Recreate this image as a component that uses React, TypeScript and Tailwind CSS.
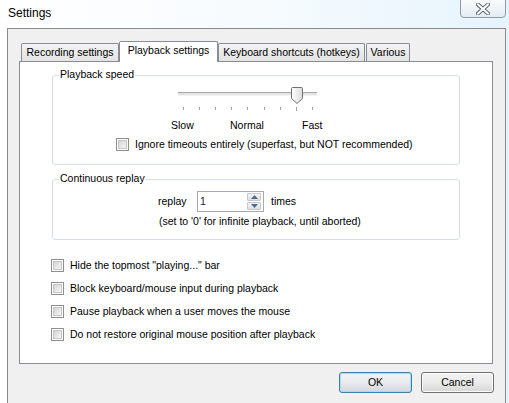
import React from "react";

function Checkbox() {
  return (
    <span className="block w-[13px] h-[13px] border border-[#8f8f8f] bg-white p-[1px] shrink-0">
      <span className="block w-full h-full border border-[#c6c6c6] bg-gradient-to-br from-[#d4d4d4] to-[#f6f6f6]" />
    </span>
  );
}

function CheckRow({ label }: { label: string }) {
  return (
    <div className="flex items-center h-[13px] gap-[6px]">
      <Checkbox />
      <span className="leading-[13px] whitespace-nowrap">{label}</span>
    </div>
  );
}

function Slider() {
  const ticks = Array.from({ length: 9 }, (_, i) => Math.round(8 + i * 16.1));
  return (
    <svg width="150" height="27" viewBox="0 0 150 27" className="block">
      <defs>
        <linearGradient id="thumb" x1="0" y1="0" x2="1" y2="0">
          <stop offset="0" stopColor="#ffffff" />
          <stop offset="1" stopColor="#dcdcdc" />
        </linearGradient>
      </defs>
      <rect x="3" y="7" width="139" height="1" fill="#a9a9a9" />
      <rect x="3" y="8" width="139" height="2" fill="#e3e3e3" />
      <rect x="3" y="10" width="139" height="1" fill="#f4f4f4" />
      {ticks.map((x, i) => (
        <line key={i} x1={x + 0.5} y1={22} x2={x + 0.5} y2={i === 7 ? 26 : 25} stroke="#a6a6a6" strokeWidth="1" />
      ))}
      <path
        d="M117.5 2.5 Q116.5 2.5 116.5 3.5 V13.5 L122 18.5 L127.5 13.5 V3.5 Q127.5 2.5 126.5 2.5 Z"
        fill="url(#thumb)"
        stroke="#6f6f6f"
        strokeWidth="1"
      />
    </svg>
  );
}

function SpinBox() {
  return (
    <div className="w-[67px] h-[21px] border border-[#a6a9b0] bg-white flex items-center justify-between pl-[2px] pr-[2px]">
      <span className="leading-[13px] text-[#23163f]">1</span>
      <div className="flex flex-col w-[14px] h-[17px] gap-[1px]">
        <div className="flex-1 border border-[#c5c9cf] rounded-[1px] bg-gradient-to-b from-[#f4f4f4] to-[#dedede] flex items-center justify-center">
          <svg width="7" height="4" viewBox="0 0 7 4"><path d="M0 4 L3.5 0 L7 4 Z" fill="#4d6a92" /></svg>
        </div>
        <div className="flex-1 border border-[#c5c9cf] rounded-[1px] bg-gradient-to-b from-[#f4f4f4] to-[#dedede] flex items-center justify-center">
          <svg width="7" height="4" viewBox="0 0 7 4"><path d="M0 0 L7 0 L3.5 4 Z" fill="#4d6a92" /></svg>
        </div>
      </div>
    </div>
  );
}

function Tab({ label, width, selected, extra }: { label: string; width: string; selected?: boolean; extra?: string }) {
  if (selected) {
    return (
      <div className={`${width} h-[21px] -mb-px relative z-10 bg-white border-t border-l border-r border-[#898c95] rounded-t-[2px] flex justify-center pt-[2px] leading-[13px] whitespace-nowrap`}>
        {label}
      </div>
    );
  }
  return (
    <div className={`${width} ${extra ?? ""} h-[18px] bg-gradient-to-b from-[#f3f3f3] to-[#e3e3e3] border-t border-l border-r border-[#898c95] rounded-t-[2px] flex justify-center pt-[2px] leading-[13px] whitespace-nowrap`}>
      {label}
    </div>
  );
}

export default function App() {
  return (
    <div className="w-[509px] h-[403px] overflow-hidden relative bg-gradient-to-r from-[#ffffff] via-[#f7fbfe] to-[#e6f4fc] font-['Liberation_Sans',Arial,sans-serif] text-[10.5px] text-black">
      <div className="h-[28px] pl-[8px] pt-[6px] text-[12px] leading-[15px] text-black">Settings</div>
      <div className="absolute left-[460px] top-[-1px] w-[46px] h-[19px] rounded-b-[4px] border border-[#8f9aa6] bg-gradient-to-b from-[#f8fbfd] to-[#e4ecf3] flex items-center justify-center">
        <svg width="14" height="12" viewBox="0 0 14 12">
          <path d="M2 1.5 L12 10.5 M12 1.5 L2 10.5" stroke="#5d6570" strokeWidth="4" strokeLinecap="square" />
          <path d="M2 1.5 L12 10.5 M12 1.5 L2 10.5" stroke="#ffffff" strokeWidth="2" strokeLinecap="square" />
        </svg>
      </div>

      <div className="ml-[7px] w-[499px] h-[375px] border-l border-t border-r border-[#8a8a8a] bg-[#f0f0f0] pt-[12px] pl-[11px]">
        <div className="flex items-end h-[20px] pl-[2px]">
          <Tab label="Recording settings" width="w-[98px]" />
          <Tab label="Playback settings" width="w-[99px]" selected />
          <Tab label="Keyboard shortcuts (hotkeys)" width="w-[147px]" />
          <Tab label="Various" width="w-[44px]" extra="ml-[1px]" />
        </div>
        <div className="w-[474px] h-[303px] border border-[#898c95] bg-white pt-[13px]">
          <div className="ml-[32px] w-[408px] h-[90px] border border-[#d5dfe5] rounded-[3px] relative flex flex-col">
            <span className="absolute left-[6px] top-[-8px] bg-white px-[1px] leading-[13px]">Playback speed</span>
            <div className="mt-[9px] ml-[122px]">
              <Slider />
            </div>
            <div className="mt-[7px] ml-[118px] flex leading-[13px] h-[13px]">
              <span className="w-[59px]">Slow</span>
              <span className="w-[72px]">Normal</span>
              <span>Fast</span>
            </div>
            <div className="mt-[6px] ml-[63px]">
              <CheckRow label="Ignore timeouts entirely (superfast, but NOT recommended)" />
            </div>
          </div>

          <div className="mt-[14px] ml-[32px] w-[408px] h-[61px] border border-[#d5dfe5] rounded-[3px] relative flex flex-col">
            <span className="absolute left-[6px] top-[-8px] bg-white px-[1px] leading-[13px]">Continuous replay</span>
            <div className="mt-[11px] ml-[105px] flex items-center h-[21px]">
              <span className="w-[39px] leading-[13px]">replay</span>
              <SpinBox />
              <span className="ml-[7px] leading-[13px]">times</span>
            </div>
            <div className="mt-[3px] ml-[106px] leading-[13px]">(set to '0' for infinite playback, until aborted)</div>
          </div>

          <div className="mt-[19px] ml-[31px] flex flex-col gap-[10px]">
            <CheckRow label={'Hide the topmost "playing..." bar'} />
            <CheckRow label="Block keyboard/mouse input during playback" />
            <CheckRow label="Pause playback when a user moves the mouse" />
            <CheckRow label="Do not restore original mouse position after playback" />
          </div>
        </div>

        <div className="mt-[8px] flex justify-end gap-[9px] pr-[11px]">
          <button className="w-[73px] h-[21px] rounded-[3px] border border-[#3c7fb1] bg-gradient-to-b from-[#f2f2f2] via-[#e9ebee] to-[#d3d6da] shadow-[inset_0_0_0_1px_#a8dcf5] leading-[13px] text-black">
            OK
          </button>
          <button className="w-[73px] h-[21px] rounded-[3px] border border-[#707070] bg-gradient-to-b from-[#f2f2f2] via-[#ebebeb] to-[#d6d6d6] shadow-[inset_0_0_0_1px_#fbfbfb] leading-[13px] text-black">
            Cancel
          </button>
        </div>
      </div>
    </div>
  );
}
